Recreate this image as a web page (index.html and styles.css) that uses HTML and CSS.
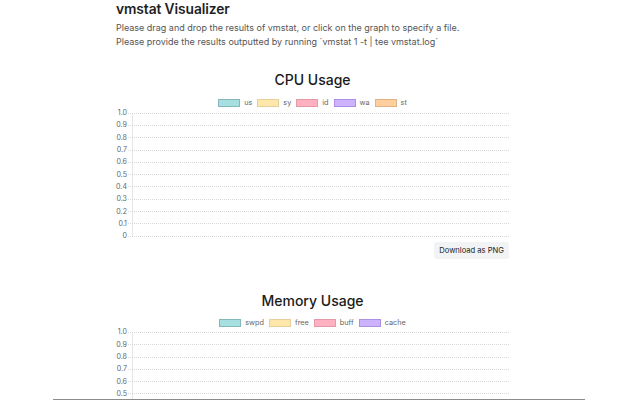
FILE: index.html
```html
<!DOCTYPE html>
<html lang="en">
<head>
<meta charset="utf-8">
<title>vmstat Visualizer</title>
<link rel="stylesheet" href="styles.css">
</head>
<body>
<main class="page">
  <h1 class="app-title">vmstat Visualizer</h1>
  <p class="intro">Please drag and drop the results of vmstat, or click on the graph to specify a file.<br>Please provide the results outputted by running `vmstat 1 -t | tee vmstat.log`</p>

  <section class="chart chart-cpu">
    <h2 class="chart-title">CPU Usage</h2>
    <ul class="legend">
      <li class="legend-item"><span class="swatch c-teal"></span>us</li>
      <li class="legend-item"><span class="swatch c-yellow"></span>sy</li>
      <li class="legend-item"><span class="swatch c-pink"></span>id</li>
      <li class="legend-item"><span class="swatch c-purple"></span>wa</li>
      <li class="legend-item"><span class="swatch c-orange"></span>st</li>
    </ul>
    <div class="plot">
      <div class="axis-row"><span class="tick">1.0</span><span class="grid-line"></span></div>
      <div class="axis-row"><span class="tick">0.9</span><span class="grid-line"></span></div>
      <div class="axis-row"><span class="tick">0.8</span><span class="grid-line"></span></div>
      <div class="axis-row"><span class="tick">0.7</span><span class="grid-line"></span></div>
      <div class="axis-row"><span class="tick">0.6</span><span class="grid-line"></span></div>
      <div class="axis-row"><span class="tick">0.5</span><span class="grid-line"></span></div>
      <div class="axis-row"><span class="tick">0.4</span><span class="grid-line"></span></div>
      <div class="axis-row"><span class="tick">0.3</span><span class="grid-line"></span></div>
      <div class="axis-row"><span class="tick">0.2</span><span class="grid-line"></span></div>
      <div class="axis-row"><span class="tick">0.1</span><span class="grid-line"></span></div>
      <div class="axis-row"><span class="tick">0</span><span class="grid-line"></span></div>
    </div>
    <div class="actions"><button class="download-btn" type="button">Download as PNG</button></div>
  </section>

  <section class="chart chart-mem">
    <h2 class="chart-title">Memory Usage</h2>
    <ul class="legend">
      <li class="legend-item"><span class="swatch c-teal"></span>swpd</li>
      <li class="legend-item"><span class="swatch c-yellow"></span>free</li>
      <li class="legend-item"><span class="swatch c-pink"></span>buff</li>
      <li class="legend-item"><span class="swatch c-purple"></span>cache</li>
    </ul>
    <div class="plot">
      <div class="axis-row"><span class="tick">1.0</span><span class="grid-line"></span></div>
      <div class="axis-row"><span class="tick">0.9</span><span class="grid-line"></span></div>
      <div class="axis-row"><span class="tick">0.8</span><span class="grid-line"></span></div>
      <div class="axis-row"><span class="tick">0.7</span><span class="grid-line"></span></div>
      <div class="axis-row"><span class="tick">0.6</span><span class="grid-line"></span></div>
      <div class="axis-row"><span class="tick">0.5</span><span class="grid-line"></span></div>
      <div class="axis-row"><span class="tick">0.4</span><span class="grid-line"></span></div>
      <div class="axis-row"><span class="tick">0.3</span><span class="grid-line"></span></div>
      <div class="axis-row"><span class="tick">0.2</span><span class="grid-line"></span></div>
      <div class="axis-row"><span class="tick">0.1</span><span class="grid-line"></span></div>
      <div class="axis-row"><span class="tick">0</span><span class="grid-line"></span></div>
    </div>
    <div class="actions"><button class="download-btn" type="button">Download as PNG</button></div>
  </section>
</main>
<div class="bottom-rule"></div>
</body>
</html>
```

FILE: styles.css
```css
html, body {
  margin: 0;
  padding: 0;
  background: #ffffff;
}

body {
  font-family: Inter, "Liberation Sans", Arial, sans-serif;
  color: #222222;
}

.page {
  margin-left: 116px;
  width: 393px;
  padding-top: 1px;
}

.app-title {
  margin: 0;
  font-size: 13.8px;
  line-height: 17px;
  font-weight: 600;
  letter-spacing: -0.1px;
  color: #1f1f1f;
}

.intro {
  margin: 3px 0 0;
  font-size: 9px;
  line-height: 14px;
  color: #555555;
}

.chart {
  display: flex;
  flex-direction: column;
}

.chart-cpu {
  margin-top: 22px;
}

.chart-mem {
  margin-top: 33px;
}

.chart-title {
  margin: 0;
  text-align: center;
  font-size: 14px;
  line-height: 18px;
  font-weight: 500;
  color: #1a1a1a;
}

.legend {
  list-style: none;
  margin: 10px 0 0;
  padding: 0;
  display: flex;
  justify-content: center;
  gap: 5px;
  height: 8px;
  font-size: 7.3px;
  line-height: 8px;
  color: #666666;
}

.chart-mem .legend {
  margin-top: 9px;
  height: 7px;
}

.legend-item {
  display: flex;
  align-items: center;
  gap: 4px;
}

.swatch {
  display: block;
  width: 20px;
  height: 6px;
  border: 1px solid;
}

.c-teal   { background: rgba(75, 192, 192, 0.5);  border-color: rgba(130, 180, 180, 0.9); }
.c-yellow { background: rgba(255, 205, 86, 0.5);  border-color: rgba(225, 205, 150, 0.9); }
.c-pink   { background: rgba(255, 99, 132, 0.5);  border-color: rgba(225, 150, 165, 0.9); }
.c-purple { background: rgba(153, 102, 255, 0.5); border-color: rgba(170, 140, 225, 0.9); }
.c-orange { background: rgba(255, 159, 64, 0.5);  border-color: rgba(225, 175, 130, 0.9); }

.plot {
  display: flex;
  flex-direction: column;
  background-image: linear-gradient(#e6e6e6, #e6e6e6);
  background-repeat: no-repeat;
  background-position: 16px 6px;
  background-size: 1px 123px;
}

.axis-row {
  display: flex;
  align-items: center;
  height: 12.3px;
}

.tick {
  width: 11px;
  text-align: right;
  font-size: 7.1px;
  line-height: 8px;
  color: #666666;
}

.grid-line {
  flex: 1;
  margin-left: 1px;
  border-top: 1px dotted #d8d8d8;
}

.actions {
  display: flex;
  justify-content: flex-end;
}

.download-btn {
  margin: 0;
  padding: 0 5px;
  height: 17px;
  border: 0;
  border-radius: 3px;
  background: #f2f3f5;
  font-family: Inter, "Liberation Sans", Arial, sans-serif;
  font-size: 7.6px;
  line-height: 17px;
  color: #222222;
}

.bottom-rule {
  position: fixed;
  left: 53px;
  bottom: 0;
  width: 532px;
  height: 1px;
  background: #8c8c8c;
}
```
